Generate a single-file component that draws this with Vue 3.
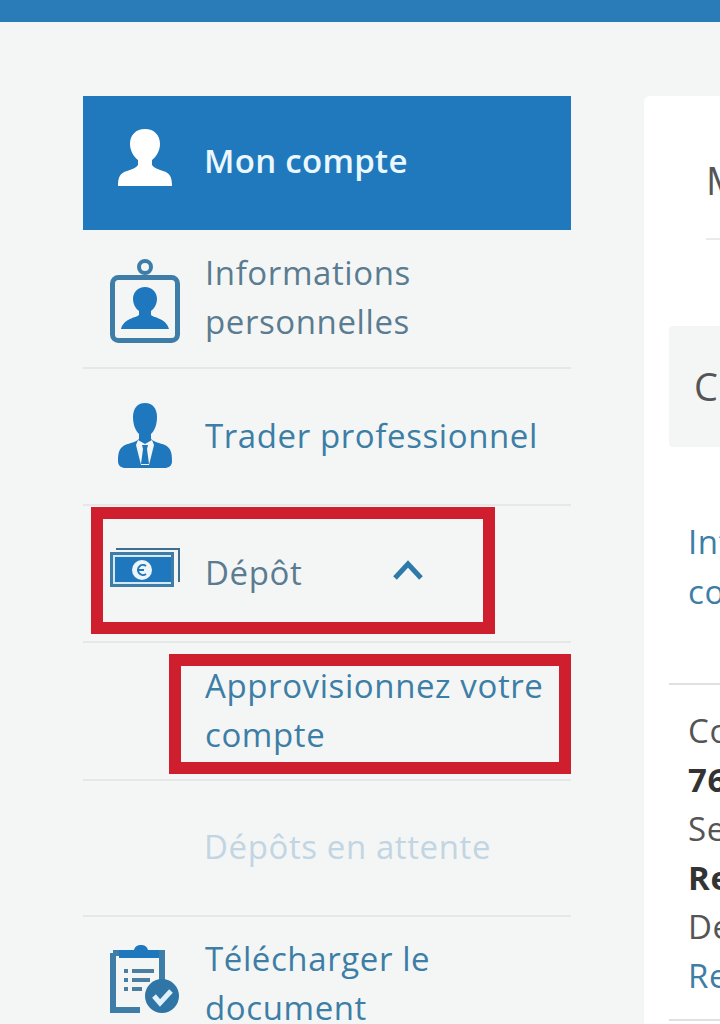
<script setup>
const rows = [
  { n: 1, key: 'badge', lines: ['Informations', 'personnelles'], tone: 'grey' },
  { n: 2, key: 'trader', lines: ['Trader professionnel'], tone: 'blue' },
  { n: 3, key: 'money', lines: ['Dépôt'], tone: 'grey', chevron: true },
  { n: 4, lines: ['Approvisionnez votre', 'compte'], tone: 'blue' },
  { n: 5, lines: ['Dépôts en attente'], tone: 'off' },
  { n: 6, key: 'clip', lines: ['Télécharger le', 'document'], tone: 'blue' }
]

const accountLines = [
  { text: 'Co' },
  { text: '76', bold: true },
  { text: 'Se' },
  { text: 'Re', bold: true },
  { text: 'De' },
  { text: 'Re', link: true }
]
</script>

<template>
  <div class="page">
    <div class="topbar"></div>
    <div class="columns">
      <nav class="sidebar">
        <div class="head-row">
          <svg class="icon head-icon" width="70" height="60" viewBox="0 0 70 60">
            <path fill="#fff" d="M35 1c9 0 15 6 15 15 0 7-4 13-8 16v5c2 3 6 4 11 6 7 2 9 6 9 15H8c0-9 2-13 9-15 5-2 9-3 11-6v-5c-4-3-8-9-8-16C20 7 26 1 35 1z" />
          </svg>
          <span class="head-label">Mon compte</span>
        </div>

        <div v-for="row in rows" :key="row.n" class="row" :class="['row-' + row.tone, 'row-n' + row.n]">
          <svg v-if="row.key === 'badge'" class="icon badge-icon" width="70" height="84" viewBox="0 0 70 84">
            <circle cx="35" cy="8" r="6" fill="none" stroke="#3e7da8" stroke-width="4" />
            <rect x="2.5" y="18.5" width="65" height="63" rx="6" fill="none" stroke="#3e7da8" stroke-width="5" />
            <path fill="#1f78bd" d="M35 28c7 0 12 5 12 12 0 5-3 10-6 12v4c3 3 15 3 18 14H11c3-11 15-11 18-14v-4c-3-2-6-7-6-12 0-7 5-12 12-12z" />
          </svg>
          <svg v-else-if="row.key === 'trader'" class="icon trader-icon" width="70" height="66" viewBox="0 0 70 66">
            <path fill="#1f78bd" d="M35 1c8 0 12 6 12 14 0 7-2 13-6 17v5c3 3 9 4 14 6 6 3 7 8 7 16 0 4-2 6-6 7H14c-4-1-6-3-6-7 0-8 1-13 7-16 5-2 11-3 14-6v-5c-4-4-6-10-6-17C23 7 27 1 35 1z" />
            <path fill="#f4f6f6" d="M28 38l7 4 7-4 2 5-5 20h-8l-5-20z" />
            <path fill="#1f78bd" d="M32 43h6l-1 4 2 15h-8l2-15z" />
          </svg>
          <svg v-else-if="row.key === 'money'" class="icon money-icon" width="70" height="40" viewBox="0 0 70 40">
            <path fill="none" stroke="#3e6f90" stroke-width="2" d="M6 1h63v33" />
            <rect x="1.5" y="5.5" width="61" height="32" fill="#d5e9f4" stroke="#3e7da8" stroke-width="3" />
            <rect x="5" y="9" width="56" height="25" fill="#1f78bd" />
            <circle cx="32" cy="22" r="10" fill="#eef5f8" />
            <path fill="none" stroke="#1f78bd" stroke-width="2" d="M36 18a5 5 0 1 0 0 8M27 22h7" />
          </svg>
          <svg v-else-if="row.key === 'clip'" class="icon clip-icon" width="70" height="70" viewBox="0 0 70 70">
            <path fill="none" stroke="#3e7da8" stroke-width="6" d="M3 9h49v30M30 66H3V9" />
            <path fill="#1f78bd" d="M9 14V6h15c1-4 4-5 7-5s6 1 7 5h11v8z" />
            <path fill="none" stroke="#4a7f9f" stroke-width="4" d="M14 27h4M22 27h22M14 36h4M22 36h18M14 45h4M22 45h10" />
            <circle cx="52" cy="52" r="17" fill="#2f75a6" />
            <path fill="none" stroke="#dff1fb" stroke-width="5" d="M44 52l6 7 11-12" />
          </svg>
          <span class="label">
            <span v-for="line in row.lines" :key="line" class="line">{{ line }}</span>
          </span>
          <svg v-if="row.chevron" class="chevron" width="32" height="22" viewBox="0 0 32 22">
            <path fill="none" stroke="#2f7aa8" stroke-width="5" d="M3 19L16 5l13 14" />
          </svg>
        </div>

        <div class="marker marker-deposit"></div>
        <div class="marker marker-fund"></div>
      </nav>

      <main class="panel">
        <div class="panel-title">M</div>
        <div class="panel-rule"></div>
        <div class="panel-box">C</div>
        <div class="panel-intro">
          <span class="line">Int</span>
          <span class="line">co</span>
        </div>
        <div class="panel-details">
          <span
            v-for="(item, i) in accountLines"
            :key="i"
            class="line"
            :class="{ 'is-bold': item.bold, 'is-link': item.link }"
          >{{ item.text }}</span>
        </div>
      </main>
    </div>
  </div>
</template>

<style>
html,
body {
  margin: 0;
  height: 1024px;
  overflow: hidden;
  background: #f4f6f6;
}
</style>

<style scoped>
.page {
  width: 720px;
  height: 1024px;
  overflow: hidden;
  font-family: "Open Sans", "Liberation Sans", sans-serif;
  font-size: 33px;
  line-height: 49px;
  letter-spacing: 0.6px;
  color: #555;
}

.topbar {
  height: 22px;
  background: #2a7cb8;
}

.columns {
  display: flex;
  padding: 74px 0 0 83px;
  height: 928px;
}

.sidebar {
  position: relative;
  flex: none;
  width: 488px;
}

.head-row {
  display: flex;
  align-items: center;
  height: 134px;
  background: #2079bd;
}

.head-label {
  margin-left: -1px;
  padding-bottom: 6px;
  color: #eaf7fd;
  font-weight: 600;
  letter-spacing: 0.3px;
}

.row {
  display: flex;
  align-items: center;
  box-sizing: border-box;
  height: 137px;
  padding-left: 121px;
  border-bottom: 2px solid #e6e8e8;
}

.row-n1 {
  height: 139px;
}

.row-n4 {
  height: 138px;
  padding-left: 122px;
}

.row-n5 {
  height: 136px;
}

.row-grey {
  color: #5b7c90;
}

.row-blue {
  color: #3d7ea6;
}

.row-off {
  color: #c2d5e2;
}

.icon {
  flex: none;
  margin: 0 25px 0 27px;
}

.row .icon {
  margin-left: -94px;
}

.head-icon {
  margin-bottom: 10px;
}

.row .badge-icon {
  margin-top: 4px;
}

.row .trader-icon {
  margin-bottom: 4px;
}

.row .money-icon {
  margin-bottom: 11px;
}

.row .clip-icon {
  margin-bottom: 12px;
}

.label {
  display: flex;
  flex-direction: column;
  margin-bottom: 3px;
}

.line {
  display: block;
  white-space: nowrap;
}

.chevron {
  margin-left: 90px;
  margin-top: -8px;
}

.marker {
  position: absolute;
  box-sizing: border-box;
  border: 12px solid #cf1f2e;
}

.marker-deposit {
  left: 8px;
  top: 411px;
  width: 404px;
  height: 127px;
}

.marker-fund {
  left: 86px;
  top: 558px;
  width: 402px;
  height: 120px;
}

.panel {
  flex: none;
  width: 400px;
  margin-left: 73px;
  padding: 0 0 0 25px;
  background: #fff;
  border-radius: 6px 0 0 0;
}

.panel-title {
  margin: 60px 0 0 37px;
  font-size: 38px;
  line-height: 48px;
}

.panel-rule {
  height: 2px;
  margin: 34px 0 0 37px;
  background: #e9eaea;
}

.panel-box {
  box-sizing: border-box;
  height: 121px;
  margin-top: 86px;
  padding-left: 25px;
  background: #f4f5f5;
  border-radius: 4px;
  font-size: 38px;
  line-height: 121px;
}

.panel-intro {
  box-sizing: border-box;
  height: 238px;
  padding: 70px 0 0 19px;
  border-bottom: 2px solid #dfe1e1;
  color: #3d7ea6;
  line-height: 50px;
}

.panel-details {
  box-sizing: border-box;
  height: 336px;
  padding: 21px 0 0 19px;
  border-bottom: 2px solid #dfe1e1;
}

.is-bold {
  font-weight: 700;
  color: #333;
}

.is-link {
  color: #3d7ea6;
}
</style>
